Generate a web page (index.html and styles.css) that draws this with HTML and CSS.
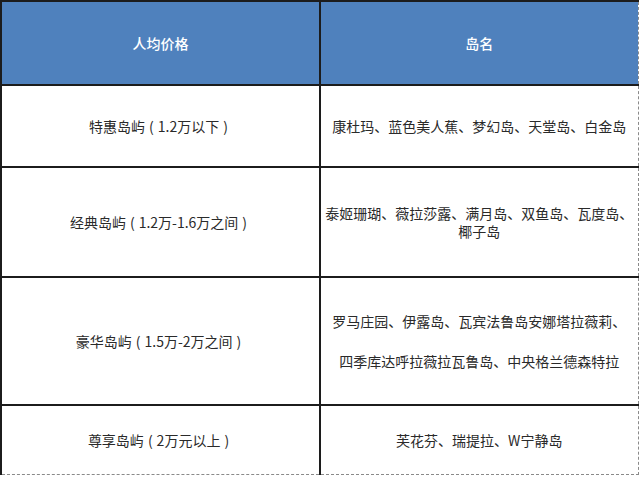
FILE: index.html
```html
<!DOCTYPE html>
<html lang="zh-CN">
<head>
<meta charset="utf-8">
<title>岛屿价格</title>
<link rel="stylesheet" href="styles.css">
</head>
<body>
<table class="islands">
  <colgroup>
    <col class="c1">
    <col class="c2">
  </colgroup>
  <thead>
    <tr class="r-head">
      <th>人均价格</th>
      <th>岛名</th>
    </tr>
  </thead>
  <tbody>
    <tr class="r1">
      <td>特惠岛屿<span class="p">(</span>1.2万以下<span class="p">)</span></td>
      <td>康杜玛、蓝色美人蕉、梦幻岛、天堂岛、白金岛</td>
    </tr>
    <tr class="r2">
      <td>经典岛屿<span class="p">(</span>1.2万-1.6万之间<span class="p">)</span></td>
      <td class="tight">泰姬珊瑚、薇拉莎露、满月岛、双鱼岛、瓦度岛、<br>椰子岛</td>
    </tr>
    <tr class="r3">
      <td>豪华岛屿<span class="p">(</span>1.5万-2万之间<span class="p">)</span></td>
      <td class="wide">罗马庄园、伊露岛、瓦宾法鲁岛安娜塔拉薇莉、<br>四季库达呼拉薇拉瓦鲁岛、中央格兰德森特拉</td>
    </tr>
    <tr class="r4">
      <td>尊享岛屿<span class="p">(</span>2万元以上<span class="p">)</span></td>
      <td>芙花芬、瑞提拉、W宁静岛</td>
    </tr>
  </tbody>
</table>
</body>
</html>
```

FILE: styles.css
```css
html, body {
  margin: 0;
  padding: 0;
  background: #ffffff;
}

.islands {
  border-collapse: collapse;
  table-layout: fixed;
  width: 637px;
  font-family: "Noto Sans CJK SC", "Noto Sans", sans-serif;
  font-size: 14px;
  color: #2a2a2a;
}

.c1 { width: 319px; }
.c2 { width: 318px; }

.islands th,
.islands td {
  border: 2px solid #1c1c1c;
  text-align: center;
  vertical-align: middle;
  padding: 0 4px;
  line-height: 18px;
}

.islands th {
  background: #4f81bd;
  color: #ffffff;
  font-weight: 500;
  font-size: 14px;
}

.islands tr > :last-child {
  border-right: 1px dashed #8a8a8a;
}

.islands tbody tr:last-child td {
  border-bottom: 1px dashed #8a8a8a;
}

.p {
  padding: 0 4px;
}

.r-head { height: 84px; }
.r1 { height: 82px; }
.r2 { height: 110px; }
.r3 { height: 128px; }
.r4 { height: 69px; }

.islands td.wide { line-height: 40px; }
```
